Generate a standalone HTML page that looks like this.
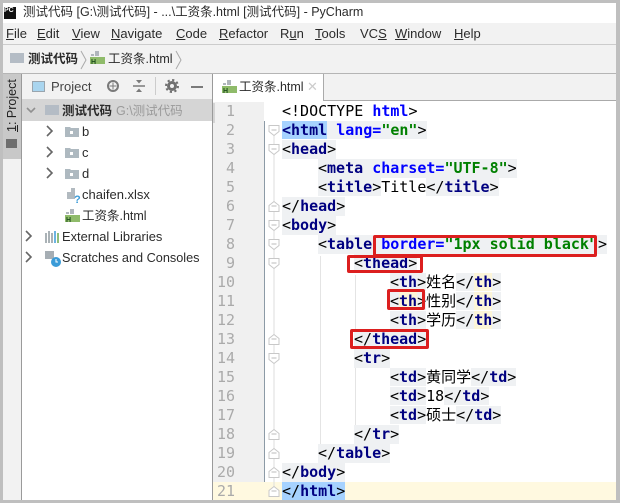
<!DOCTYPE html>
<html><head><meta charset="utf-8">
<style>
html,body{margin:0;padding:0}
body{width:620px;height:503px;position:relative;overflow:hidden;background:#fff;font-family:"Liberation Sans","Noto Sans CJK SC",sans-serif;color:#222}
.a{position:absolute;white-space:nowrap}
.t{position:absolute;white-space:nowrap;font-size:13px;line-height:18px;color:#2b2b2b}
u{text-decoration:underline}
#code div{position:absolute;height:19px;line-height:19px;white-space:pre;font:15px/19px "DejaVu Sans Mono","Noto Sans CJK SC",monospace;color:#000}
.h{background:#eff1f3}
b{color:#000080;font-weight:bold}
i{font-style:normal;font-weight:bold;color:#0000ff}
s{text-decoration:none;font-weight:bold;color:#008000}
.y{background:#fcf5d8}
.n{position:absolute;left:214px;width:21px;text-align:right;font:15px/19px "DejaVu Sans Mono",monospace;color:#aaa}
.r{position:absolute;border:3px solid #dc1f1f;box-sizing:border-box;border-radius:2px}
</style></head><body>
<!-- title / menu -->
<div class="a" style="left:0;top:0;width:620px;height:23px;background:#fff"></div>
<div class="a" style="left:4px;top:7px;width:12px;height:12px;background:#111;color:#fff;font:bold 7px/8px 'Liberation Sans'">PC</div>
<div class="t" style="left:23px;top:3px;font-size:12.5px;line-height:18px">测试代码 [G:\测试代码] - ...\工资条.html [测试代码] - PyCharm</div>
<div class="a" style="left:0;top:23px;width:620px;height:21px;background:#f2f2f2;border-bottom:1px solid #ccc"></div>
<div class="t" style="left:6px;top:25px"><u>F</u>ile</div>
<div class="t" style="left:37px;top:25px"><u>E</u>dit</div>
<div class="t" style="left:72px;top:25px"><u>V</u>iew</div>
<div class="t" style="left:111px;top:25px"><u>N</u>avigate</div>
<div class="t" style="left:176px;top:25px"><u>C</u>ode</div>
<div class="t" style="left:219px;top:25px"><u>R</u>efactor</div>
<div class="t" style="left:280px;top:25px">R<u>u</u>n</div>
<div class="t" style="left:315px;top:25px"><u>T</u>ools</div>
<div class="t" style="left:360px;top:25px">VC<u>S</u></div>
<div class="t" style="left:395px;top:25px"><u>W</u>indow</div>
<div class="t" style="left:454px;top:25px"><u>H</u>elp</div>
<!-- breadcrumbs -->
<div class="a" style="left:0;top:45px;width:620px;height:28px;background:#f2f2f2;border-bottom:1px solid #b5b5b5"></div>
<div class="a" style="left:10px;top:53px;width:14px;height:10px;background:#b4bcc5"></div>
<div class="t" style="left:28px;top:50px;font-weight:bold;font-size:12.5px">测试代码</div>
<svg class="a" style="left:80px;top:50px" width="8" height="20"><path d="M1 1L6 10L1 19" fill="none" stroke="#aaa"/></svg>
<svg class="a" style="left:90px;top:51px" width="15" height="15"><path d="M5 0h4v5h-4zM1 3h3v2h-3z" fill="#b0b6bc"/><rect x="0" y="6" width="15" height="7" fill="#8fbb6a"/><text x="1" y="13" font-size="7" font-weight="bold" fill="#1d4d1d" font-family="Liberation Sans">H</text></svg>
<div class="t" style="left:108px;top:50px;font-size:12.5px">工资条.html</div>
<svg class="a" style="left:175px;top:50px" width="8" height="20"><path d="M1 1L6 10L1 19" fill="none" stroke="#aaa"/></svg>
<!-- left tool strip -->
<div class="a" style="left:3px;top:74px;width:18px;height:426px;background:#f2f2f2;border-right:1px solid #9a9a9a"></div>
<div class="a" style="left:3px;top:74px;width:18px;height:85px;background:#c8c8c8"></div>
<div class="a" style="left:5px;top:123px;transform:rotate(-90deg);transform-origin:0 0;font-size:12.5px;line-height:15px;width:50px;margin-top:9px;color:#222"><u>1</u>: Project</div>
<div class="a" style="left:6px;top:139px;width:11px;height:9px;background:#6e6e6e"></div>
<!-- project header -->
<div class="a" style="left:22px;top:74px;width:190px;height:25px;background:#f2f2f2"></div>
<div class="a" style="left:32px;top:81px;width:11px;height:9px;background:#a9d5ef;border:1px solid #9aa5ae"></div>
<div class="t" style="left:51px;top:78px;color:#444">Project</div>
<svg class="a" style="left:106px;top:79px" width="14" height="14"><circle cx="7" cy="7" r="5" fill="none" stroke="#7a7a7a" stroke-width="2"/><path d="M7 3.500v7M3.500 7h7" stroke="#7a7a7a"/></svg>
<svg class="a" style="left:132px;top:79px" width="14" height="14"><path d="M1 7h12" stroke="#7a7a7a" stroke-width="1.5"/><path d="M4 1l3 3.500L10 1zM4 13l3-3.500L10 13z" fill="#7a7a7a"/></svg>
<div class="a" style="left:155px;top:77px;width:1px;height:18px;background:#ccc"></div>
<svg class="a" style="left:165px;top:79px" width="14" height="14"><circle cx="7" cy="7" r="3.500" fill="none" stroke="#707070" stroke-width="3"/><circle cx="7" cy="7" r="6" fill="none" stroke="#707070" stroke-width="2" stroke-dasharray="2.200 2.500"/></svg>
<div class="a" style="left:191px;top:86px;width:12px;height:2px;background:#7a7a7a"></div>
<!-- tree -->
<div class="a" style="left:22px;top:99px;width:190px;height:22px;background:#d5d5d5"></div>
<svg class="a" style="left:24px;top:103px" width="14" height="14"><path d="M3 5l4 4 4-4" fill="none" stroke="#909090" stroke-width="1.6"/></svg>
<div class="a" style="left:45px;top:105px;width:14px;height:10px;background:#b4bcc5"></div>
<div class="t" style="left:62px;top:102px;font-weight:bold;font-size:12.5px">测试代码</div>
<div class="t" style="left:116px;top:102px;font-size:12.5px;color:#9a9a9a">G:\测试代码</div>
<svg class="a" style="left:44px;top:124px" width="12" height="14"><path d="M3 2l5 5-5 5" fill="none" stroke="#666" stroke-width="1.6"/></svg>
<svg class="a" style="left:44px;top:145px" width="12" height="14"><path d="M3 2l5 5-5 5" fill="none" stroke="#666" stroke-width="1.6"/></svg>
<svg class="a" style="left:44px;top:166px" width="12" height="14"><path d="M3 2l5 5-5 5" fill="none" stroke="#666" stroke-width="1.6"/></svg>
<svg class="a" style="left:65px;top:126px" width="14" height="12"><path d="M0 1h5l1 1h8v9H0z" fill="#aeb9c0"/><rect x="5" y="5" width="3" height="3" fill="#fff"/></svg>
<svg class="a" style="left:65px;top:147px" width="14" height="12"><path d="M0 1h5l1 1h8v9H0z" fill="#aeb9c0"/><rect x="5" y="5" width="3" height="3" fill="#fff"/></svg>
<svg class="a" style="left:65px;top:168px" width="14" height="12"><path d="M0 1h5l1 1h8v9H0z" fill="#aeb9c0"/><rect x="5" y="5" width="3" height="3" fill="#fff"/></svg>
<div class="t" style="left:82px;top:123px">b</div>
<div class="t" style="left:82px;top:144px">c</div>
<div class="t" style="left:82px;top:165px">d</div>
<svg class="a" style="left:67px;top:188px" width="14" height="16"><path d="M4 0h4v11H0V4h4z" fill="#b2bac0"/><text x="7" y="15" font-size="11" font-weight="bold" fill="#3a9bd8" font-family="Liberation Sans">?</text></svg>
<div class="t" style="left:82px;top:186px">chaifen.xlsx</div>
<svg class="a" style="left:65px;top:209px" width="15" height="15"><path d="M5 0h4v5h-4zM1 3h3v2h-3z" fill="#b0b6bc"/><rect x="0" y="6" width="15" height="7" fill="#8fbb6a"/><text x="1" y="13" font-size="7" font-weight="bold" fill="#1d4d1d" font-family="Liberation Sans">H</text></svg>
<div class="t" style="left:82px;top:207px;font-size:12.5px">工资条.html</div>
<svg class="a" style="left:23px;top:229px" width="12" height="14"><path d="M3 2l5 5-5 5" fill="none" stroke="#666" stroke-width="1.6"/></svg>
<svg class="a" style="left:23px;top:250px" width="12" height="14"><path d="M3 2l5 5-5 5" fill="none" stroke="#666" stroke-width="1.6"/></svg>
<svg class="a" style="left:45px;top:231px" width="15" height="13"><path d="M1 2v10M4 0v12M7 2v10" stroke="#8e989e" stroke-width="1.5"/><path d="M10 0v12" stroke="#3a9bd8" stroke-width="1.5"/><path d="M13 2v10" stroke="#6aa84f" stroke-width="1.5"/></svg>
<div class="t" style="left:62px;top:228px;font-size:12.9px">External Libraries</div>
<svg class="a" style="left:45px;top:251px" width="16" height="16"><rect x="0" y="0" width="9" height="8" fill="#a6aeb4"/><circle cx="11" cy="11" r="5" fill="#3a9bd8"/><path d="M11 8v3h2" stroke="#fff" fill="none"/></svg>
<div class="t" style="left:62px;top:249px;font-size:12.7px">Scratches and Consoles</div>
<!-- tab bar -->
<div class="a" style="left:212px;top:74px;width:1px;height:426px;background:#9a9a9a"></div>
<div class="a" style="left:213px;top:74px;width:407px;height:27px;background:#f2f2f2;border-bottom:1px solid #aaa;box-sizing:border-box"></div>
<div class="a" style="left:213px;top:74px;width:111px;height:27px;background:#fff;border-right:1px solid #aaa;box-sizing:border-box"></div>
<svg class="a" style="left:222px;top:80px" width="15" height="15"><path d="M5 0h4v5h-4zM1 3h3v2h-3z" fill="#b0b6bc"/><rect x="0" y="6" width="15" height="7" fill="#8fbb6a"/><text x="1" y="13" font-size="7" font-weight="bold" fill="#1d4d1d" font-family="Liberation Sans">H</text></svg>
<div class="t" style="left:239px;top:78px;font-size:12.5px">工资条.html</div>
<div class="a" style="left:307px;top:79px;font:13px/16px 'Liberation Sans';color:#ccc">✕</div>
<!-- editor gutter -->
<div class="a" style="left:213px;top:102px;width:51px;height:398px;background:#f0f0f0"></div>
<div class="a" style="left:213px;top:103px;width:2px;height:20px;background:#d4d4d4"></div>
<div class="a" style="left:264px;top:121px;width:1px;height:379px;background:#8c9aa6"></div>
<div class="a" style="left:213px;top:482px;width:407px;height:18px;background:#fff9e0"></div>
<div class="a" style="left:320px;top:256px;width:1px;height:190px;background:#e4e4e4"></div>
<div class="a" style="left:355px;top:275px;width:1px;height:152px;background:#e4e4e4"></div>
<!-- fold markers -->
<svg class="a" style="left:268px;top:102px" width="14" height="398">
<path d="M6 28V394" stroke="#dedede" fill="none"/>
<g fill="#fff" stroke="#c8c8c8">
<path d="M1 23.500h10v6l-5 4-5-4z"/>
<path d="M1 42.500h10v6l-5 4-5-4z"/>
<path d="M1 109.500v-6l5-4 5 4v6z"/>
<path d="M1 118.500h10v6l-5 4-5-4z"/>
<path d="M1 137.500h10v6l-5 4-5-4z"/>
<path d="M1 156.500h10v6l-5 4-5-4z"/>
<path d="M1 242.500v-6l5-4 5 4v6z"/>
<path d="M1 251.500h10v6l-5 4-5-4z"/>
<path d="M1 337.500v-6l5-4 5 4v6z"/>
<path d="M1 356.500v-6l5-4 5 4v6z"/>
<path d="M1 375.500v-6l5-4 5 4v6z"/>
<path d="M1 394.500v-6l5-4 5 4v6z"/>
</g>
<g stroke="#bbb"><path d="M3.500 28h5M3.500 47h5M3.500 104h5M3.500 123h5M3.500 142h5M3.500 161h5M3.500 237h5M3.500 256h5M3.500 332h5M3.500 351h5M3.500 370h5M3.500 389h5"/></g>
</svg>
<!-- line numbers -->
<div class="n" style="top:102px">1</div><div class="n" style="top:121px">2</div><div class="n" style="top:140px">3</div><div class="n" style="top:159px">4</div><div class="n" style="top:178px">5</div><div class="n" style="top:197px">6</div><div class="n" style="top:216px">7</div><div class="n" style="top:235px">8</div><div class="n" style="top:254px">9</div><div class="n" style="top:273px">10</div><div class="n" style="top:292px">11</div><div class="n" style="top:311px">12</div><div class="n" style="top:330px">13</div><div class="n" style="top:349px">14</div><div class="n" style="top:368px">15</div><div class="n" style="top:387px">16</div><div class="n" style="top:406px">17</div><div class="n" style="top:425px">18</div><div class="n" style="top:444px">19</div><div class="n" style="top:463px">20</div><div class="n" style="top:482px">21</div>
<!-- code -->
<div id="code">
<div style="left:282px;top:102px"><span>&lt;!DOCTYPE </span><span><i>html</i></span>&gt;</div>
<div style="left:282px;top:121px"><span style="background:#a6d2ff;color:#000080;font-weight:bold">&lt;html</span><span class="h"> <i>lang=</i><s>"en"</s>&gt;</span></div>
<div style="left:282px;top:140px" class="h">&lt;<b>head</b>&gt;</div>
<div style="left:318px;top:159px" class="h">&lt;<b>meta</b> <i>charset=</i><s>"UTF-8"</s>&gt;</div>
<div style="left:318px;top:178px"><span class="h">&lt;<b>title</b>&gt;</span>Title<span class="h">&lt;/<b>title</b>&gt;</span></div>
<div style="left:282px;top:197px" class="h">&lt;/<b>head</b>&gt;</div>
<div style="left:282px;top:216px" class="h">&lt;<b>body</b>&gt;</div>
<div style="left:318px;top:235px" class="h">&lt;<b>table</b> <i>border=</i><s>"1px solid black"</s>&gt;</div>
<div style="left:354px;top:254px" class="h">&lt;<b>thead</b>&gt;</div>
<div style="left:390px;top:273px"><span class="h">&lt;<b>th</b>&gt;</span>姓名<span class="h">&lt;/</span><span class="y"><b>th</b></span><span class="h">&gt;</span></div>
<div style="left:390px;top:292px"><span class="h">&lt;</span><span class="y"><b>th</b></span><span class="h">&gt;</span>性别<span class="h">&lt;/</span><span class="y"><b>th</b></span><span class="h">&gt;</span></div>
<div style="left:390px;top:311px"><span class="h">&lt;<b>th</b>&gt;</span>学历<span class="h">&lt;/</span><span class="y"><b>th</b></span><span class="h">&gt;</span></div>
<div style="left:354px;top:330px" class="h">&lt;/<b>thead</b>&gt;</div>
<div style="left:354px;top:349px" class="h">&lt;<b>tr</b>&gt;</div>
<div style="left:390px;top:368px"><span class="h">&lt;<b>td</b>&gt;</span>黄同学<span class="h">&lt;/<b>td</b>&gt;</span></div>
<div style="left:390px;top:387px"><span class="h">&lt;<b>td</b>&gt;</span>18<span class="h">&lt;/<b>td</b>&gt;</span></div>
<div style="left:390px;top:406px"><span class="h">&lt;<b>td</b>&gt;</span>硕士<span class="h">&lt;/<b>td</b>&gt;</span></div>
<div style="left:354px;top:425px" class="h">&lt;/<b>tr</b>&gt;</div>
<div style="left:318px;top:444px" class="h">&lt;/<b>table</b>&gt;</div>
<div style="left:282px;top:463px" class="h">&lt;/<b>body</b>&gt;</div>
<div style="left:282px;top:482px;background:#a6d2ff">&lt;/<b>html</b>&gt;</div>
</div>
<!-- red boxes -->
<div class="r" style="left:373px;top:235px;width:224px;height:22px"></div>
<div class="r" style="left:347px;top:255px;width:76px;height:18px"></div>
<div class="r" style="left:387px;top:289px;width:38px;height:21px"></div>
<div class="r" style="left:350px;top:329px;width:79px;height:20px"></div>
<!-- window border -->
<div class="a" style="left:0;top:0;width:620px;height:3px;background:#bfbfbf"></div>
<div class="a" style="left:0;top:0;width:3px;height:503px;background:#bfbfbf"></div>
<div class="a" style="left:616px;top:0;width:4px;height:503px;background:#bfbfbf"></div>
<div class="a" style="left:0;top:500px;width:620px;height:3px;background:#bfbfbf"></div>
</body></html>
